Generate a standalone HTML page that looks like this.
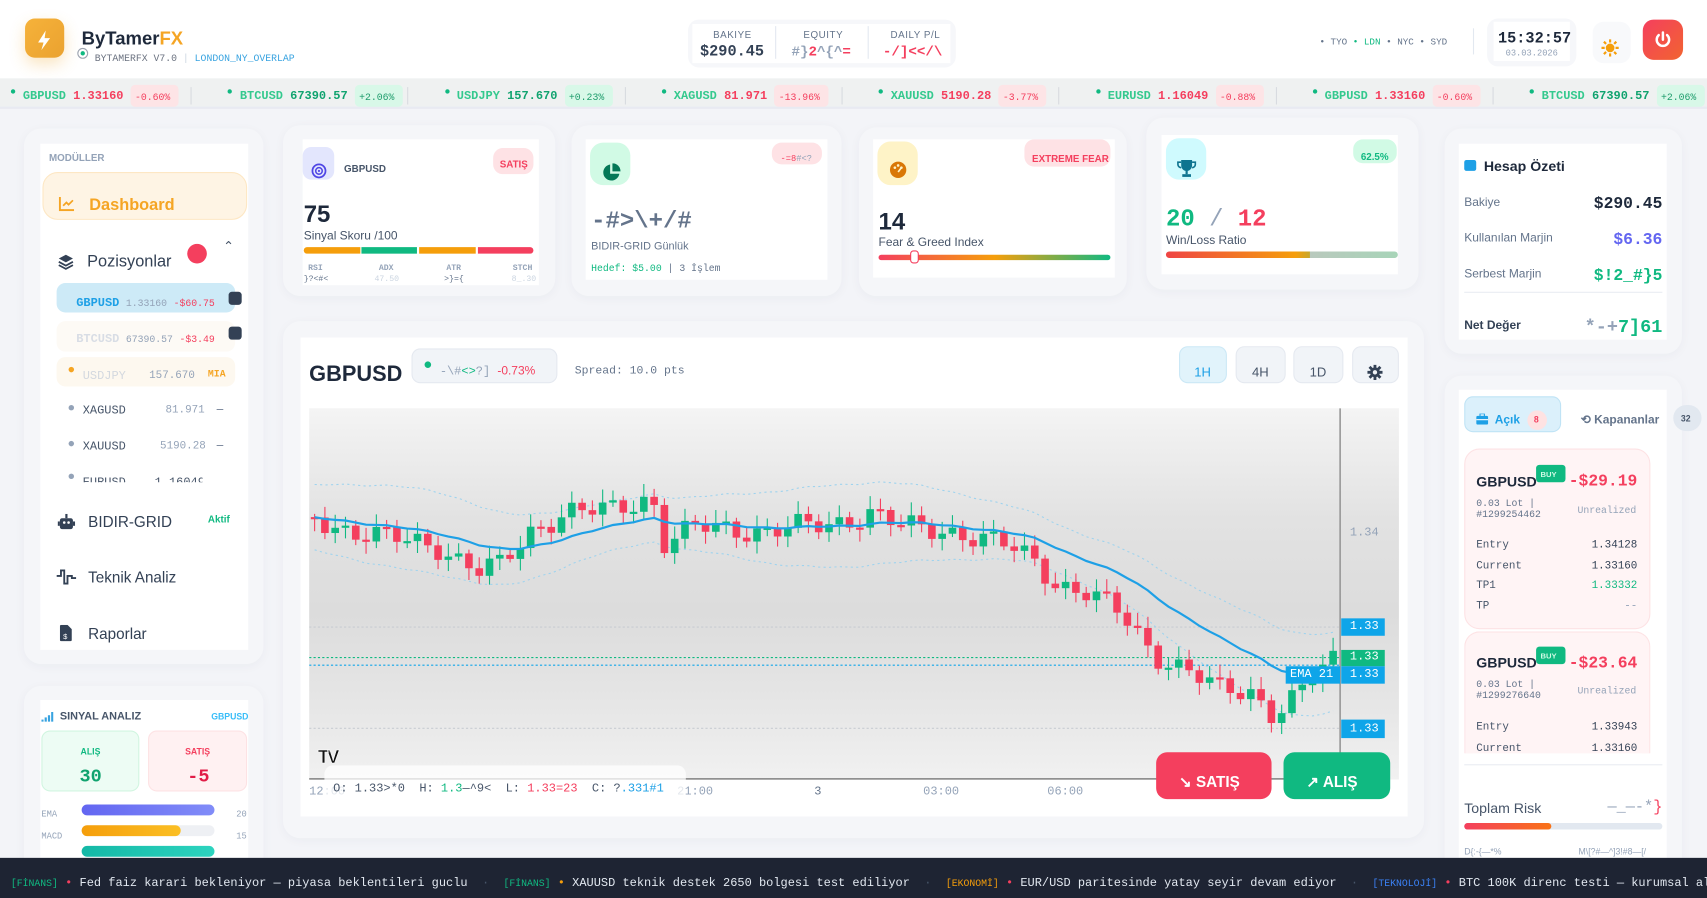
<!DOCTYPE html>
<html><head><meta charset="utf-8">
<style>
*{box-sizing:border-box;margin:0;padding:0}
html,body{width:1707px;height:898px;overflow:hidden;background:#f3f4f8}
#w{position:absolute;left:0;top:0;width:1568px;height:825px;transform:scale(1.08865);transform-origin:0 0;font-family:"Liberation Sans",sans-serif;color:#1e293b}
.a{position:absolute}
.m{font-family:"Liberation Mono","DejaVu Sans Mono",monospace}
.t{position:absolute;white-space:nowrap}
.card{position:absolute;background:#f5f6f9;border-radius:16px;box-shadow:0 2px 10px rgba(30,40,80,.04)}
.in{position:absolute;background:#fff}
.pill{position:absolute;border-radius:9px}
</style></head><body><div id="w">

<!-- header -->
<div class="a" style="left:0;top:0;width:1568px;height:72px;background:#fff"></div>
<div class="a" style="left:23px;top:17px;width:36px;height:36px;border-radius:9px;background:linear-gradient(135deg,#f6b23a,#eaa230);box-shadow:0 6px 14px rgba(240,170,50,.3)"></div>
<svg class="a" style="left:31px;top:26px" width="20" height="22" viewBox="0 0 20 22"><path d="M11 2 L4 13 H9 L7 20 L15 9 H10 Z" fill="#fff"/></svg>
<div class="t" style="left:75px;top:26px;font-size:17px;font-weight:bold;color:#1e293b">ByTamer<span style="color:#f5a524">FX</span></div>
<div class="a" style="left:71px;top:44px;width:10px;height:10px;border-radius:50%;border:1.5px solid #9ca3af;background:#fff"></div>
<div class="a" style="left:74px;top:47px;width:4px;height:4px;border-radius:50%;background:#10b981"></div>
<div class="t m" style="left:87px;top:49px;font-size:9px;color:#6b7280">BYTAMERFX V7.0 <span style="color:#cbd5e1">|</span> <span style="color:#38a3e0">LONDON_NY_OVERLAP</span></div>

<div class="a" style="left:632px;top:18px;width:246px;height:44px;border-radius:10px;background:#f6f7fa"></div>
<div class="a" style="left:636px;top:22px;width:237px;height:36px;background:#fff"></div>
<div class="a" style="left:712px;top:24px;width:1px;height:30px;background:#e2e8f0"></div>
<div class="a" style="left:797px;top:24px;width:1px;height:30px;background:#e2e8f0"></div>
<div class="t" style="left:655px;top:27px;font-size:9px;color:#64748b;letter-spacing:.5px">BAKIYE</div>
<div class="t m" style="left:643px;top:40px;font-size:14px;font-weight:bold;color:#334155">$290.45</div>
<div class="t" style="left:738px;top:27px;font-size:9px;color:#64748b;letter-spacing:.5px">EQUITY</div>
<div class="t m" style="left:727px;top:40px;font-size:13px;font-weight:bold;color:#94a3b8">#}<span style="color:#f43f5e">2</span>^{^<span style="color:#f43f5e">=</span></div>
<div class="t" style="left:818px;top:27px;font-size:9px;color:#64748b;letter-spacing:.5px">DAILY P/L</div>
<div class="t m" style="left:811px;top:40px;font-size:13px;font-weight:bold;color:#f43f5e">-/]&lt;&lt;/\</div>

<div class="t m" style="left:1212px;top:34px;font-size:8.5px;color:#64748b">• TYO <span style="color:#10b981">• LDN</span> • NYC • SYD</div>
<div class="a" style="left:1353px;top:26px;width:1px;height:24px;background:#e2e8f0"></div>
<div class="a" style="left:1366px;top:17px;width:82px;height:44px;border-radius:10px;background:#f6f7fa"></div>
<div class="a" style="left:1372px;top:20px;width:70px;height:36px;background:#fff"></div>
<div class="t m" style="left:1376px;top:28px;font-size:14px;font-weight:bold;color:#1e293b">15:32:57</div>
<div class="t m" style="left:1383px;top:45px;font-size:8px;color:#94a3b8">03.03.2026</div>
<div class="a" style="left:1463px;top:20px;width:35px;height:38px;border-radius:10px;background:#f8f9fb"></div>
<svg class="a" style="left:1471px;top:36px" width="16" height="16" viewBox="0 0 16 16"><g fill="#f59e0b"><circle cx="8" cy="8" r="4"/><g stroke="#f59e0b" stroke-width="2"><path d="M8 0v3M8 13v3M0 8h3M13 8h3M2.3 2.3l2 2M11.7 11.7l2 2M2.3 13.7l2-2M11.7 4.3l2-2"/></g></g></svg>
<div class="a" style="left:1509px;top:18px;width:37px;height:37px;border-radius:10px;background:linear-gradient(135deg,#f43f5e,#f26430)"></div>
<svg class="a" style="left:1518px;top:27px" width="19" height="19" viewBox="0 0 20 20"><path d="M6 5.5A6 6 0 1 0 14 5.5" fill="none" stroke="#fff" stroke-width="2.4" stroke-linecap="round"/><path d="M10 3v7" stroke="#fff" stroke-width="2.4" stroke-linecap="round"/></svg>

<!-- ticker -->
<div class="a" style="left:0;top:72px;width:1568px;height:28px;background:#eff1f1;border-bottom:2px solid #e8eaf2"></div>
<div id="tick"></div>

<!-- sidebar -->
<div class="card" style="left:22px;top:118px;width:220px;height:492px"></div>
<div class="in" style="left:37px;top:132px;width:191px;height:465px"></div>
<div class="t" style="left:45px;top:140px;font-size:9px;font-weight:bold;color:#94a3b8">MODÜLLER</div>
<div class="a" style="left:39px;top:158px;width:188px;height:44px;border-radius:14px;background:#fef4e4;border:1px solid #fde7c4"></div>
<svg class="a" style="left:54px;top:180px" width="15" height="14" viewBox="0 0 15 14"><path d="M1 1v12h13" fill="none" stroke="#f5a524" stroke-width="1.8"/><path d="M4 9l3-3 2 2 4-4" fill="none" stroke="#f5a524" stroke-width="1.6"/></svg>
<div class="t" style="left:82px;top:180px;font-size:15px;color:#f5a524;font-weight:bold">Dashboard</div>
<svg class="a" style="left:53px;top:233px" width="15" height="15" viewBox="0 0 15 15"><path d="M7.5 1 14 4.5 7.5 8 1 4.5Z" fill="#334155"/><path d="M1 7.5 7.5 11 14 7.5M1 10.5 7.5 14 14 10.5" fill="none" stroke="#334155" stroke-width="1.6"/></svg>
<div class="t" style="left:80px;top:232px;font-size:15px;color:#334155">Pozisyonlar</div>
<div class="a" style="left:172px;top:224px;width:18px;height:18px;border-radius:50%;background:#f43f5e"></div>
<div class="t" style="left:205px;top:219px;font-size:12px;color:#475569">⌃</div>
<div class="a" style="left:52px;top:260px;width:164px;height:27px;border-radius:8px;background:#cdeaf7"></div>
<div class="t m" style="left:70px;top:273px;font-size:10px"><b style="color:#1ea0e6;font-size:11px">GBPUSD</b> <span style="color:#94a3b8;font-size:9px">1.33160</span> <span style="color:#f43f5e;font-size:9px">-$60.75</span></div>
<div class="a" style="left:210px;top:268px;width:12px;height:12px;border-radius:3px;background:#334155"></div>
<div class="a" style="left:52px;top:295px;width:164px;height:28px;border-radius:8px;background:#fdfaf5"></div>
<div class="t m" style="left:70px;top:306px;font-size:10px"><b style="color:#d8dde5;font-size:11px">BTCUSD</b> <span style="color:#94a3b8;font-size:9px">67390.57</span> <span style="color:#f43f5e;font-size:9px">-$3.49</span></div>
<div class="a" style="left:210px;top:300px;width:12px;height:12px;border-radius:3px;background:#334155"></div>
<div class="a" style="left:52px;top:328px;width:164px;height:27px;border-radius:8px;background:#fdf8ef"></div>
<div class="a" style="left:63px;top:337px;width:5px;height:5px;border-radius:50%;background:#f5a524"></div>
<div class="t m" style="left:76px;top:340px;font-size:11px;color:#d3d8df">USDJPY</div>
<div class="t m" style="left:137px;top:340px;font-size:10px;color:#94a3b8">157.670</div>
<div class="t m" style="left:191px;top:339px;font-size:9px;color:#f5a524;font-weight:bold">MIA</div>
<div class="a" style="left:63px;top:372px;width:5px;height:5px;border-radius:50%;background:#94a3b8"></div>
<div class="t m" style="left:76px;top:372px;font-size:11px;color:#475569">XAGUSD</div>
<div class="t m" style="left:152px;top:372px;font-size:10px;color:#94a3b8">81.971</div>
<div class="t" style="left:199px;top:370px;font-size:11px;color:#64748b">–</div>
<div class="a" style="left:63px;top:405px;width:5px;height:5px;border-radius:50%;background:#94a3b8"></div>
<div class="t m" style="left:76px;top:405px;font-size:11px;color:#475569">XAUUSD</div>
<div class="t m" style="left:147px;top:405px;font-size:10px;color:#94a3b8">5190.28</div>
<div class="t" style="left:199px;top:403px;font-size:11px;color:#64748b">–</div>
<div class="a" style="left:63px;top:435px;width:5px;height:5px;border-radius:50%;background:#94a3b8"></div>
<div class="a" style="left:76px;top:438px;width:110px;height:5px;overflow:hidden"><div class="t m" style="top:0;font-size:11px;color:#475569">EURUSD &nbsp;&nbsp;&nbsp;1.16049</div></div>
<svg class="a" style="left:53px;top:472px" width="16" height="15" viewBox="0 0 16 15"><rect x="2" y="4" width="12" height="10" rx="2" fill="#334155"/><rect x="7" y="0" width="2" height="4" fill="#334155"/><rect x="0" y="7" width="2" height="4" fill="#334155"/><rect x="14" y="7" width="2" height="4" fill="#334155"/><circle cx="6" cy="8" r="1.2" fill="#fff"/><circle cx="10" cy="8" r="1.2" fill="#fff"/></svg>
<div class="t" style="left:81px;top:471px;font-size:14px;color:#334155">BIDIR-GRID</div>
<div class="t" style="left:191px;top:472px;font-size:9px;color:#10b981;font-weight:bold">Aktif</div>
<svg class="a" style="left:52px;top:523px" width="18" height="14" viewBox="0 0 18 14"><path d="M0 6h4V1h3v12h3V6h4v2h4" fill="none" stroke="#334155" stroke-width="1.7"/></svg>
<div class="t" style="left:81px;top:522px;font-size:14px;color:#334155">Teknik Analiz</div>
<svg class="a" style="left:55px;top:574px" width="11" height="15" viewBox="0 0 11 15"><path d="M0 1.5Q0 0 1.5 0H7l4 4v9.5Q11 15 9.5 15h-8Q0 15 0 13.5Z" fill="#334155"/><text x="3" y="13" font-size="7" fill="#fff" font-family="Liberation Sans">$</text></svg>
<div class="t" style="left:81px;top:574px;font-size:14px;color:#334155">Raporlar</div>

<!-- signal card -->
<div class="card" style="left:22px;top:630px;width:220px;height:180px"></div>
<div class="in" style="left:37px;top:643px;width:191px;height:160px"></div>
<svg class="a" style="left:38px;top:654px" width="11" height="9"><rect x="0" y="7" width="2" height="2" fill="#38a3e0"/><rect x="3" y="5" width="2" height="4" fill="#38a3e0"/><rect x="6" y="3" width="2" height="6" fill="#38a3e0"/><rect x="9" y="0" width="2" height="9" fill="#38a3e0"/></svg>
<div class="t" style="left:55px;top:653px;font-size:10px;font-weight:bold;color:#475569">SINYAL ANALIZ</div>
<div class="t" style="left:194px;top:654px;font-size:8px;font-weight:bold;color:#38bdf8">GBPUSD</div>
<div class="a" style="left:38px;top:671px;width:90px;height:56px;border-radius:8px;background:#edfcf4;border:1px solid #d1f5e0"></div>
<div class="t" style="left:74px;top:686px;font-size:8px;font-weight:bold;color:#10b981">ALIŞ</div>
<div class="t m" style="left:73px;top:705px;font-size:17px;font-weight:bold;color:#10a36f">30</div>
<div class="a" style="left:136px;top:671px;width:91px;height:56px;border-radius:8px;background:#fff1f2;border:1px solid #fde2e4"></div>
<div class="t" style="left:170px;top:686px;font-size:8px;font-weight:bold;color:#f43f5e">SATIŞ</div>
<div class="t m" style="left:172px;top:705px;font-size:17px;font-weight:bold;color:#e11d48">-5</div>
<div class="t m" style="left:38px;top:744px;font-size:8px;color:#94a3b8">EMA</div>
<div class="a" style="left:75px;top:739px;width:122px;height:10px;border-radius:5px;background:linear-gradient(90deg,#6366f1,#818cf8)"></div>
<div class="t m" style="left:217px;top:744px;font-size:8px;color:#94a3b8">20</div>
<div class="t m" style="left:38px;top:764px;font-size:8px;color:#94a3b8">MACD</div>
<div class="a" style="left:75px;top:758px;width:122px;height:10px;border-radius:5px;background:#eef0f4"></div>
<div class="a" style="left:75px;top:758px;width:91px;height:10px;border-radius:5px;background:linear-gradient(90deg,#f59e0b,#fbbf24)"></div>
<div class="t m" style="left:217px;top:764px;font-size:8px;color:#94a3b8">15</div>
<div class="a" style="left:75px;top:777px;width:122px;height:10px;border-radius:5px;background:linear-gradient(90deg,#14b8a6,#2dd4bf)"></div>

<!-- cards row -->
<div class="card" style="left:260px;top:115px;width:250px;height:157px"></div>
<div class="in" style="left:278px;top:128px;width:217px;height:134px"></div>
<div class="a" style="left:278px;top:135px;width:29px;height:30px;border-radius:8px;background:#e3e6fd"></div>
<svg class="a" style="left:286px;top:150px" width="14" height="14"><circle cx="7" cy="7" r="6" fill="none" stroke="#4f46e5" stroke-width="1.6"/><circle cx="7" cy="7" r="3" fill="none" stroke="#4f46e5" stroke-width="1.4"/><circle cx="7" cy="7" r="1" fill="#4f46e5"/></svg>
<div class="t" style="left:316px;top:150px;font-size:9px;font-weight:bold;color:#475569">GBPUSD</div>
<div class="pill" style="left:453px;top:136px;width:37px;height:24px;background:#fee2e5"></div>
<div class="t" style="left:459px;top:146px;font-size:9px;font-weight:bold;color:#f43f5e">SATIŞ</div>
<div class="t" style="left:279px;top:184px;font-size:22px;font-weight:bold;color:#1e293b">75</div>
<div class="t" style="left:279px;top:211px;font-size:11px;color:#475569">Sinyal Skoru /100</div>
<div class="a" style="left:279px;top:227px;width:52px;height:6px;border-radius:3px 0 0 3px;background:#f59e0b"></div>
<div class="a" style="left:332px;top:227px;width:51px;height:6px;background:#10b981"></div>
<div class="a" style="left:385px;top:227px;width:52px;height:6px;background:#f59e0b"></div>
<div class="a" style="left:439px;top:227px;width:51px;height:6px;border-radius:0 3px 3px 0;background:#f43f5e"></div>
<div class="t m" style="left:283px;top:243px;font-size:7.5px;color:#94a3b8;font-weight:bold">RSI</div>
<div class="t m" style="left:348px;top:243px;font-size:7.5px;color:#94a3b8;font-weight:bold">ADX</div>
<div class="t m" style="left:410px;top:243px;font-size:7.5px;color:#94a3b8;font-weight:bold">ATR</div>
<div class="t m" style="left:471px;top:243px;font-size:7.5px;color:#94a3b8;font-weight:bold">STCH</div>
<div class="t m" style="left:279px;top:253px;font-size:7.5px;color:#64748b">}?&lt;#&lt;</div>
<div class="t m" style="left:344px;top:253px;font-size:7.5px;color:#cbd5e1">47.50</div>
<div class="t m" style="left:408px;top:253px;font-size:7.5px;color:#64748b">&gt;}={</div>
<div class="t m" style="left:470px;top:253px;font-size:7.5px;color:#cbd5e1">8_.30</div>

<div class="card" style="left:525px;top:115px;width:248px;height:157px"></div>
<div class="in" style="left:538px;top:128px;width:222px;height:129px"></div>
<div class="a" style="left:542px;top:131px;width:37px;height:39px;border-radius:12px;background:#d1fae5"></div>
<svg class="a" style="left:553px;top:150px" width="17" height="17" viewBox="0 0 16 16"><path d="M7 1A7 7 0 1 0 15 9H7Z" fill="#047857"/><path d="M9 0V7H16A7 7 0 0 0 9 0Z" fill="#047857"/></svg>
<div class="pill" style="left:709px;top:131px;width:46px;height:20px;background:#fee2e5"></div>
<div class="t m" style="left:717px;top:142px;font-size:8px;color:#f43f5e">-=8<span style="color:#94a3b8">#&lt;?</span></div>
<div class="t m" style="left:543px;top:191px;font-size:22px;font-weight:bold;color:#64748b">-#&gt;\+/#</div>
<div class="t" style="left:543px;top:221px;font-size:10px;color:#64748b">BIDIR-GRID Günlük</div>
<div class="t m" style="left:543px;top:242px;font-size:9px;color:#10b981">Hedef: $5.00 <span style="color:#64748b">| 3 İşlem</span></div>

<div class="card" style="left:789px;top:117px;width:246px;height:155px"></div>
<div class="in" style="left:802px;top:128px;width:222px;height:127px"></div>
<div class="a" style="left:806px;top:130px;width:37px;height:40px;border-radius:12px;background:#fef3c7"></div>
<svg class="a" style="left:817px;top:148px" width="16" height="16"><circle cx="8" cy="8" r="7.5" fill="#d97706"/><circle cx="5" cy="6" r="1.2" fill="#fef3c7"/><circle cx="8" cy="4" r="1.2" fill="#fef3c7"/><circle cx="11" cy="6" r="1.2" fill="#fef3c7"/><path d="M8 10 11 6" stroke="#fef3c7" stroke-width="1.5"/></svg>
<div class="pill" style="left:941px;top:128px;width:79px;height:25px;background:#fee2e5"></div>
<div class="t" style="left:948px;top:141px;font-size:9px;font-weight:bold;color:#f43f5e">EXTREME FEAR</div>
<div class="t" style="left:807px;top:191px;font-size:22px;font-weight:bold;color:#1e293b">14</div>
<div class="t" style="left:807px;top:217px;font-size:11px;color:#475569">Fear &amp; Greed Index</div>
<div class="a" style="left:807px;top:234px;width:213px;height:5px;border-radius:3px;background:linear-gradient(90deg,#f43f5e,#f59e0b 50%,#10b981)"></div>
<div class="a" style="left:836px;top:230px;width:8px;height:12px;border-radius:3px;background:#fff;border:1px solid #f43f5e"></div>

<div class="card" style="left:1053px;top:108px;width:250px;height:158px"></div>
<div class="in" style="left:1067px;top:124px;width:217px;height:128px"></div>
<div class="a" style="left:1071px;top:127px;width:37px;height:38px;border-radius:12px;background:#cffafe"></div>
<svg class="a" style="left:1081px;top:146px" width="18" height="17" viewBox="0 0 18 17"><path d="M4 1h10v5a5 5 0 0 1-10 0Z" fill="#0e7490"/><path d="M4 3H1v2a3 3 0 0 0 3 3M14 3h3v2a3 3 0 0 1-3 3" fill="none" stroke="#0e7490" stroke-width="1.5"/><rect x="8" y="10" width="2" height="4" fill="#0e7490"/><rect x="5" y="14" width="8" height="2.5" fill="#0e7490"/></svg>
<div class="pill" style="left:1243px;top:128px;width:40px;height:22px;background:#d1fae5"></div>
<div class="t" style="left:1250px;top:139px;font-size:9px;font-weight:bold;color:#10b981">62.5%</div>
<div class="t m" style="left:1071px;top:189px;font-size:22px;font-weight:bold"><span style="color:#10b981">20</span> <span style="color:#94a3b8;font-weight:normal">/</span> <span style="color:#f43f5e">12</span></div>
<div class="t" style="left:1071px;top:215px;font-size:11px;color:#475569">Win/Loss Ratio</div>
<div class="a" style="left:1071px;top:231px;width:213px;height:6px;border-radius:3px;background:linear-gradient(90deg,#ef4444,#f59e0b 56%,#c8a72a 62%,#b9c9bd 62.1%,#a7d4b8)"></div>

<!-- account -->
<div class="card" style="left:1327px;top:118px;width:218px;height:207px"></div>
<div class="in" style="left:1340px;top:132px;width:191px;height:180px"></div>
<div class="a" style="left:1345px;top:147px;width:11px;height:10px;border-radius:2px;background:#1ea0e6"></div>
<div class="t" style="left:1363px;top:145px;font-size:13px;font-weight:bold;color:#1e293b">Hesap Özeti</div>
<div class="t" style="left:1345px;top:180px;font-size:11px;color:#64748b">Bakiye</div>
<div class="t m" style="right:41px;top:179px;font-size:15px;font-weight:bold;color:#1e293b">$290.45</div>
<div class="t" style="left:1345px;top:213px;font-size:11px;color:#64748b">Kullanılan Marjin</div>
<div class="t m" style="right:41px;top:212px;font-size:15px;font-weight:bold;color:#6366f1">$6.36</div>
<div class="t" style="left:1345px;top:246px;font-size:11px;color:#64748b">Serbest Marjin</div>
<div class="t m" style="right:41px;top:245px;font-size:15px;font-weight:bold;color:#10b981">$!2_#}5</div>
<div class="a" style="left:1345px;top:268px;width:182px;height:1px;background:#e8ecf2"></div>
<div class="t" style="left:1345px;top:293px;font-size:11px;font-weight:bold;color:#334155">Net Değer</div>
<div class="t m" style="right:41px;top:292px;font-size:17px;font-weight:bold;color:#10b981"><span style="color:#94a3b8">*-+</span>7]61</div>

<!-- positions -->
<div class="card" style="left:1327px;top:345px;width:218px;height:460px"></div>
<div class="in" style="left:1340px;top:358px;width:191px;height:440px"></div>
<div class="a" style="left:1345px;top:364px;width:89px;height:33px;border-radius:8px;background:#dbf0fb;border:1px solid #bfe3f5"></div>
<svg class="a" style="left:1356px;top:380px" width="11" height="10"><rect x="0" y="2" width="11" height="8" rx="1.5" fill="#1ea0e6"/><rect x="3.5" y="0" width="4" height="3" fill="none" stroke="#1ea0e6" stroke-width="1"/><rect x="0" y="5" width="11" height="1" fill="#fff"/></svg>
<div class="t" style="left:1373px;top:380px;font-size:11px;font-weight:bold;color:#1ea0e6">Açık</div>
<div class="a" style="left:1403px;top:377px;width:18px;height:18px;border-radius:50%;background:#fee2e2"></div>
<div class="t" style="left:1409px;top:381px;font-size:8px;color:#f43f5e;font-weight:bold">8</div>
<div class="t" style="left:1452px;top:379px;font-size:11px;color:#64748b;font-weight:bold">⟲ Kapananlar</div>
<div class="a" style="left:1537px;top:372px;width:26px;height:24px;border-radius:12px;background:#e2e8f0"></div>
<div class="t" style="left:1544px;top:380px;font-size:8px;font-weight:bold;color:#475569">32</div>

<div class="a" style="left:1345px;top:412px;width:171px;height:166px;border-radius:14px;background:#fff4f5;border:1px solid #fde2e4"></div>
<div class="t" style="left:1356px;top:435px;font-size:13px;font-weight:bold;color:#1e293b">GBPUSD</div>
<div class="a" style="left:1411px;top:427px;width:27px;height:16px;border-radius:3px;background:#10b981"></div>
<div class="t" style="left:1415px;top:433px;font-size:7px;font-weight:bold;color:#d1fae5">BUY</div>
<div class="t m" style="right:64px;top:434px;font-size:15px;font-weight:bold;color:#f43f5e">-$29.19</div>
<div class="t m" style="left:1356px;top:458px;font-size:9px;color:#64748b">0.03 Lot |<br>#1299254462</div>
<div class="t m" style="left:1449px;top:464px;font-size:9px;color:#94a3b8">Unrealized</div>
<div class="t m" style="left:1356px;top:493px;font-size:10px;color:#475569;line-height:18.7px">Entry<br>Current<br>TP1<br>TP</div>
<div class="t m" style="left:1462px;top:493px;width:42px;text-align:right;font-size:10px;color:#334155;line-height:18.7px">1.34128<br>1.33160<br><span style="color:#10b981">1.33332</span><br><span style="color:#94a3b8">--</span></div>

<div class="a" style="left:1345px;top:580px;width:171px;height:112px;border-radius:14px 14px 0 0;background:#fff4f5;border:1px solid #fde2e4;border-bottom:none"></div>
<div class="t" style="left:1356px;top:601px;font-size:13px;font-weight:bold;color:#1e293b">GBPUSD</div>
<div class="a" style="left:1411px;top:594px;width:27px;height:16px;border-radius:3px;background:#10b981"></div>
<div class="t" style="left:1415px;top:600px;font-size:7px;font-weight:bold;color:#d1fae5">BUY</div>
<div class="t m" style="right:64px;top:601px;font-size:15px;font-weight:bold;color:#f43f5e">-$23.64</div>
<div class="t m" style="left:1356px;top:624px;font-size:9px;color:#64748b">0.03 Lot |<br>#1299276640</div>
<div class="t m" style="left:1449px;top:630px;font-size:9px;color:#94a3b8">Unrealized</div>
<div class="t m" style="left:1356px;top:659px;font-size:10px;color:#475569;line-height:19.5px">Entry<br>Current</div>
<div class="t m" style="left:1462px;top:659px;width:42px;text-align:right;font-size:10px;color:#334155;line-height:19.5px">1.33943<br>1.33160</div>
<div class="a" style="left:1345px;top:702px;width:182px;height:1px;background:#e8ecf2"></div>
<div class="t" style="left:1345px;top:735px;font-size:13px;color:#475569">Toplam Risk</div>
<div class="t m" style="right:41px;top:734px;font-size:14px;color:#94a3b8">—_—-*<span style="color:#f43f5e">}</span></div>
<div class="a" style="left:1345px;top:756px;width:182px;height:6px;border-radius:3px;background:#e2e8f0"></div>
<div class="a" style="left:1345px;top:756px;width:80px;height:6px;border-radius:3px;background:linear-gradient(90deg,#f43f5e,#f97316)"></div>
<div class="t" style="left:1345px;top:778px;font-size:8px;color:#94a3b8">D{:-{—*%</div>
<div class="t" style="left:1450px;top:778px;font-size:8px;color:#94a3b8">M\[?#—^]3!#8—[/</div>

<!-- chart -->
<div class="card" style="left:260px;top:295px;width:1048px;height:475px"></div>
<div class="in" style="left:276px;top:310px;width:1017px;height:440px"></div>
<div class="t" style="left:284px;top:333px;font-size:20px;font-weight:bold;color:#1e293b">GBPUSD</div>
<div class="a" style="left:378px;top:320px;width:134px;height:32px;border-radius:8px;background:#f1f4f8;border:1px solid #e5e9f0"></div>
<div class="a" style="left:390px;top:332px;width:6px;height:6px;border-radius:50%;background:#10b981"></div>
<div class="t m" style="left:404px;top:335px;font-size:11px;color:#94a3b8">-\#<span style="color:#10b981">&lt;&gt;</span>?] <span style="color:#f43f5e;font-family:'Liberation Sans'">-0.73%</span></div>
<div class="t m" style="left:528px;top:335px;font-size:10.5px;color:#64748b">Spread: 10.0 pts</div>
<div class="a" style="left:1083px;top:318px;width:44px;height:34px;border-radius:8px;background:#e1f3fb;border:1px solid #cbe8f6"></div>
<div class="t" style="left:1097px;top:335px;font-size:12px;color:#1ea0e6">1H</div>
<div class="a" style="left:1135px;top:318px;width:46px;height:34px;border-radius:8px;background:#f1f4f8;border:1px solid #e5e9f0"></div>
<div class="t" style="left:1150px;top:335px;font-size:12px;color:#475569">4H</div>
<div class="a" style="left:1188px;top:318px;width:46px;height:34px;border-radius:8px;background:#f1f4f8;border:1px solid #e5e9f0"></div>
<div class="t" style="left:1203px;top:335px;font-size:12px;color:#475569">1D</div>
<div class="a" style="left:1242px;top:318px;width:43px;height:34px;border-radius:8px;background:#f1f4f8;border:1px solid #e5e9f0"></div>
<svg class="a" style="left:1256px;top:335px" width="14" height="14" viewBox="0 0 14 14"><g fill="#334155"><circle cx="7" cy="7" r="4.5"/><g stroke="#334155" stroke-width="2.6"><path d="M7 0v14M0 7h14M2 2l10 10M12 2 2 12"/></g></g><circle cx="7" cy="7" r="2" fill="#f1f4f8"/></svg>

<div class="a" style="left:284px;top:375px;width:1001px;height:341px;background:linear-gradient(180deg,#f4f4f4 0%,#e2e2e2 30%,#dcdcdc 55%,#e6e6e6 80%,#f1f1f1 100%)"></div>
<svg id="ch" class="a" style="left:284px;top:375px" width="1001" height="341" viewBox="284 375 1001 341"></svg>
<div class="t m" style="left:1240px;top:484px;font-size:11px;color:#94a3b8">1.34</div>
<div class="a" style="left:1232px;top:568px;width:40px;height:16px;background:#0ea5e9"></div><div class="t m" style="left:1240px;top:570px;font-size:11px;color:#fff">1.33</div>
<div class="a" style="left:1232px;top:597px;width:40px;height:15px;background:#10b981"></div><div class="t m" style="left:1240px;top:598px;font-size:11px;color:#fff">1.33</div>
<div class="a" style="left:1181px;top:612px;width:50px;height:16px;background:#0ea5e9"></div><div class="t m" style="left:1185px;top:614px;font-size:11px;color:#fff">EMA 21</div>
<div class="a" style="left:1232px;top:612px;width:40px;height:16px;background:#0ea5e9"></div><div class="t m" style="left:1240px;top:614px;font-size:11px;color:#fff">1.33</div>
<div class="a" style="left:1232px;top:661px;width:40px;height:17px;background:#0ea5e9"></div><div class="t m" style="left:1240px;top:664px;font-size:11px;color:#fff">1.33</div>
<div class="a" style="left:284px;top:715px;width:950px;height:1px;background:#555"></div>
<div class="t m" style="left:284px;top:722px;font-size:11px;color:#94a3b8">12:00</div>
<div class="t m" style="left:622px;top:722px;font-size:11px;color:#94a3b8">21:00</div>
<div class="t m" style="left:748px;top:722px;font-size:11px;color:#64748b">3</div>
<div class="t m" style="left:848px;top:722px;font-size:11px;color:#94a3b8">03:00</div>
<div class="t m" style="left:962px;top:722px;font-size:11px;color:#94a3b8">06:00</div>
<div class="a" style="left:298px;top:703px;width:332px;height:36px;border-radius:8px;background:rgba(255,255,255,.75)"></div>
<div class="t m" style="left:306px;top:719px;font-size:11px;color:#475569">O: 1.33&gt;*0 &nbsp;H: <span style="color:#10b981">1.3</span>—^9&lt; &nbsp;L: <span style="color:#f43f5e">1.33=23</span> &nbsp;C: ?<span style="color:#1ea0e6">.331#1</span></div>
<div class="t" style="left:292px;top:686px;font-size:17px;font-weight:bold;color:#111;letter-spacing:-2px;-webkit-text-stroke:.5px #fff">TV</div>
<div class="a" style="left:1062px;top:691px;width:106px;height:43px;border-radius:10px;background:#f43f5e"></div>
<div class="t" style="left:1083px;top:710px;font-size:14px;font-weight:bold;color:#fff">↘ SATIŞ</div>
<div class="a" style="left:1179px;top:691px;width:98px;height:43px;border-radius:10px;background:#10b981"></div>
<div class="t" style="left:1200px;top:710px;font-size:14px;font-weight:bold;color:#fff">↗ ALIŞ</div>

<!-- news -->
<div class="a" style="left:0;top:788px;width:1568px;height:37px;background:#1e2433"></div>
<div class="t m" style="left:10px;top:806px;font-size:11px;color:#e2e8f0"><span style="color:#10b981;font-size:9px">[FİNANS]</span> <span style="color:#f43f5e">•</span> Fed faiz karari bekleniyor — piyasa beklentileri guclu &nbsp;<span style="color:#475569">·</span>&nbsp; <span style="color:#10b981;font-size:9px">[FİNANS]</span> <span style="color:#f59e0b">•</span> XAUUSD teknik destek 2650 bolgesi test ediliyor &nbsp;<span style="color:#475569">·</span>&nbsp; <span style="color:#f59e0b;font-size:9px">[EKONOMİ]</span> <span style="color:#f43f5e">•</span> EUR/USD paritesinde yatay seyir devam ediyor &nbsp;<span style="color:#475569">·</span>&nbsp; <span style="color:#3b82f6;font-size:9px">[TEKNOLOJİ]</span> <span style="color:#f43f5e">•</span> BTC 100K direnc testi — kurumsal alim</div>

</div>
<script>
(function(){
var tk=[["GBPUSD","1.33160","-0.60%",0],["BTCUSD","67390.57","+2.06%",1],["USDJPY","157.670","+0.23%",1],["XAGUSD","81.971","-13.96%",0],["XAUUSD","5190.28","-3.77%",0],["EURUSD","1.16049","-0.88%",0],["GBPUSD","1.33160","-0.60%",0],["BTCUSD","67390.57","+2.06%",1]];
var h="";for(var i=0;i<tk.length;i++){var x=10+i*199.3,u=tk[i][3];
h+='<div class="a" style="left:'+x+'px;top:82px;width:4px;height:4px;border-radius:50%;background:#10b981"></div>';
h+='<div class="t m" style="left:'+(x+11)+'px;top:83px;font-size:11px;font-weight:bold;color:#34c98e">'+tk[i][0]+' <span style="color:'+(u?'#10a36f':'#f43f5e')+'">'+tk[i][1]+'</span></div>';
var px=x+11+(tk[i][0].length+tk[i][1].length+2)*6.6;
h+='<div class="a" style="left:'+px+'px;top:78px;width:'+(tk[i][2].length*6+8)+'px;height:20px;border-radius:4px;background:'+(u?'#d8f8e8':'#fde4e6')+'"></div>';
h+='<div class="t m" style="left:'+(px+4)+'px;top:85px;font-size:9px;color:'+(u?'#1f9d6c':'#f43f5e')+'">'+tk[i][2]+'</div>';
if(i<7)h+='<div class="a" style="left:'+(x+165)+'px;top:80px;width:1px;height:16px;background:#d8dbe0"></div>';}
document.getElementById('tick').innerHTML=h;
var P=[[288,475],[330,490],[360,495],[400,500],[440,525],[460,520],[490,485],[520,470],[560,470],[600,455],[605,500],[640,485],[700,487],[760,483],[800,470],[830,485],[880,488],[920,500],[950,515],[970,535],[1000,545],[1030,565],[1060,600],[1090,615],[1120,635],[1150,635],[1170,655],[1190,640],[1210,620],[1228,605]];
function f(x){for(var i=1;i<P.length;i++)if(x<=P[i][0]){var a=P[i-1],b=P[i],t=(x-a[0])/(b[0]-a[0]);return a[1]+(b[1]-a[1])*t;}return P[P.length-1][1];}
var s='';
[576,604,611,669].forEach(function(y,k){s+='<line x1="284" x2="1231" y1="'+y+'" y2="'+y+'" stroke="'+(k==1?'#10b981':k==2?'#0ea5e9':'#c8ccd2')+'" stroke-width="1" stroke-dasharray="2,2"/>';});
s+='<line x1="1231" x2="1231" y1="375" y2="716" stroke="#999" stroke-width="1.5"/>';
var prev=f(288),e=prev,em=[],c,x;
var cs='';
for(var i=0;i*9.45+289<=1226;i++){x=289+i*9.45;c=f(x)+Math.sin(i*1.7)*8+Math.sin(i*0.63)*5;var o=prev;
var top=Math.min(o,c),bot=Math.max(o,c);if(bot-top<2)bot=top+2;
var col=c<o?'#10b981':'#f43f5e';
var wt=top-3-Math.abs(Math.sin(i*2.3))*9,wb=bot+3+Math.abs(Math.cos(i*1.9))*8;
cs+='<line x1="'+x+'" x2="'+x+'" y1="'+wt+'" y2="'+wb+'" stroke="'+col+'" stroke-width="1"/><rect x="'+(x-3.5)+'" y="'+top+'" width="7" height="'+(bot-top)+'" fill="'+col+'"/>';
e=e+(c-e)*0.11;em.push([x,e]);prev=c;}
var d='',u='',l='';em.forEach(function(p,k){var w=30+8*Math.sin(k*0.15);d+=(k?'L':'M')+p[0]+' '+p[1];u+=(k?'L':'M')+p[0]+' '+(p[1]-w);l+=(k?'L':'M')+p[0]+' '+(p[1]+w);});
s+='<path d="'+u+'" fill="none" stroke="#9fd3ee" stroke-width="1" stroke-dasharray="2,3"/><path d="'+l+'" fill="none" stroke="#9fd3ee" stroke-width="1" stroke-dasharray="2,3"/>';
s+=cs+'<path d="'+d+'" fill="none" stroke="#1ea0e6" stroke-width="2"/>';
document.getElementById('ch').innerHTML=s;
})();
</script>
</body></html>
